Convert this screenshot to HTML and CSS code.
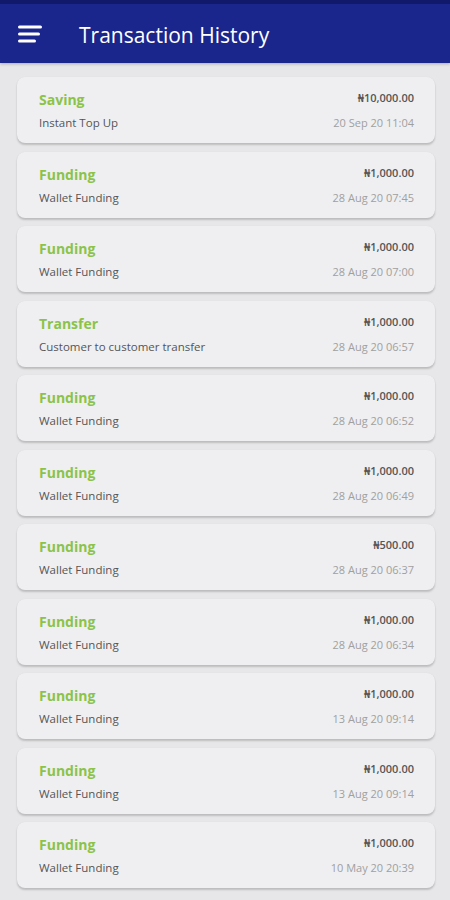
FILE: index.html
```html
<!DOCTYPE html>
<html lang="en">
<head>
  <meta charset="UTF-8" />
  <title>Transaction History</title>
  <meta name="viewport" content="width=device-width, initial-scale=1.0">
  <link rel="stylesheet" href="styles.css">
</head>
<body>
  <!-- App Bar -->
  <header class="app-bar">
    <button class="menu-btn" aria-label="Menu">
      <svg width="24" height="20" viewBox="0 0 24 20">
        <line x1="1.5" y1="3" x2="22.5" y2="3" />
        <line x1="1.5" y1="10" x2="20.5" y2="10" />
        <line x1="1.5" y1="17" x2="16.5" y2="17" />
      </svg>
    </button>
    <h1 class="app-title">Transaction History</h1>
  </header>

  <!-- Transactions -->
  <main class="tx-list">
    <div class="tx-card">
      <div class="tx-row">
        <span class="tx-type">Saving</span>
        <span class="tx-amount">&#8358;10,000.00</span>
      </div>
      <div class="tx-row">
        <span class="tx-desc">Instant Top Up</span>
        <span class="tx-date">20 Sep 20 11:04</span>
      </div>
    </div>
    <div class="tx-card">
      <div class="tx-row">
        <span class="tx-type">Funding</span>
        <span class="tx-amount">&#8358;1,000.00</span>
      </div>
      <div class="tx-row">
        <span class="tx-desc">Wallet Funding</span>
        <span class="tx-date">28 Aug 20 07:45</span>
      </div>
    </div>
    <div class="tx-card">
      <div class="tx-row">
        <span class="tx-type">Funding</span>
        <span class="tx-amount">&#8358;1,000.00</span>
      </div>
      <div class="tx-row">
        <span class="tx-desc">Wallet Funding</span>
        <span class="tx-date">28 Aug 20 07:00</span>
      </div>
    </div>
    <div class="tx-card">
      <div class="tx-row">
        <span class="tx-type">Transfer</span>
        <span class="tx-amount">&#8358;1,000.00</span>
      </div>
      <div class="tx-row">
        <span class="tx-desc">Customer to customer transfer</span>
        <span class="tx-date">28 Aug 20 06:57</span>
      </div>
    </div>
    <div class="tx-card">
      <div class="tx-row">
        <span class="tx-type">Funding</span>
        <span class="tx-amount">&#8358;1,000.00</span>
      </div>
      <div class="tx-row">
        <span class="tx-desc">Wallet Funding</span>
        <span class="tx-date">28 Aug 20 06:52</span>
      </div>
    </div>
    <div class="tx-card">
      <div class="tx-row">
        <span class="tx-type">Funding</span>
        <span class="tx-amount">&#8358;1,000.00</span>
      </div>
      <div class="tx-row">
        <span class="tx-desc">Wallet Funding</span>
        <span class="tx-date">28 Aug 20 06:49</span>
      </div>
    </div>
    <div class="tx-card">
      <div class="tx-row">
        <span class="tx-type">Funding</span>
        <span class="tx-amount">&#8358;500.00</span>
      </div>
      <div class="tx-row">
        <span class="tx-desc">Wallet Funding</span>
        <span class="tx-date">28 Aug 20 06:37</span>
      </div>
    </div>
    <div class="tx-card">
      <div class="tx-row">
        <span class="tx-type">Funding</span>
        <span class="tx-amount">&#8358;1,000.00</span>
      </div>
      <div class="tx-row">
        <span class="tx-desc">Wallet Funding</span>
        <span class="tx-date">28 Aug 20 06:34</span>
      </div>
    </div>
    <div class="tx-card">
      <div class="tx-row">
        <span class="tx-type">Funding</span>
        <span class="tx-amount">&#8358;1,000.00</span>
      </div>
      <div class="tx-row">
        <span class="tx-desc">Wallet Funding</span>
        <span class="tx-date">13 Aug 20 09:14</span>
      </div>
    </div>
    <div class="tx-card">
      <div class="tx-row">
        <span class="tx-type">Funding</span>
        <span class="tx-amount">&#8358;1,000.00</span>
      </div>
      <div class="tx-row">
        <span class="tx-desc">Wallet Funding</span>
        <span class="tx-date">13 Aug 20 09:14</span>
      </div>
    </div>
    <div class="tx-card">
      <div class="tx-row">
        <span class="tx-type">Funding</span>
        <span class="tx-amount">&#8358;1,000.00</span>
      </div>
      <div class="tx-row">
        <span class="tx-desc">Wallet Funding</span>
        <span class="tx-date">10 May 20 20:39</span>
      </div>
    </div>
  </main>
</body>
</html>
```

FILE: styles.css
```css
/* Basic Reset & Font */
* {
  margin: 0;
  padding: 0;
  box-sizing: border-box;
}
body {
  font-family: 'Open Sans', 'Noto Sans', sans-serif;
  background-color: #e7e7e9;
  color: #444;
  height: 900px;
  overflow: hidden;
}

/* App Bar */
.app-bar {
  height: 63px;
  background-color: #1b268c;
  border-top: 4px solid #111a6a;
  display: flex;
  align-items: center;
  padding: 0 0 0 18px;
  box-shadow: 0 1px 3px rgba(0, 0, 0, 0.25);
}
.menu-btn {
  background: none;
  border: none;
  width: 24px;
  height: 20px;
  display: flex;
  cursor: pointer;
}
.menu-btn line {
  stroke: #fff;
  stroke-width: 3;
  stroke-linecap: round;
}
.app-title {
  margin: 2px 0 0 37px;
  color: #fff;
  font-size: 21px;
  font-weight: 400;
}

/* Transaction List */
.tx-list {
  padding: 14px 15px 0 17px;
  display: flex;
  flex-direction: column;
  gap: 8.5px;
}
.tx-card {
  height: 66px;
  background-color: #efeff1;
  border-radius: 8px;
  padding: 12px 21px 0 22px;
  box-shadow: 0 2px 2px rgba(0, 0, 0, 0.18), 0 0 1px rgba(0, 0, 0, 0.08);
  display: flex;
  flex-direction: column;
  gap: 3px;
}
.tx-row {
  display: flex;
  justify-content: space-between;
  align-items: center;
}
.tx-type {
  font-size: 14px;
  font-weight: 700;
  color: #8bc34a;
  line-height: 20px;
}
.tx-amount {
  font-size: 11px;
  font-weight: 600;
  color: #555;
  line-height: 18px;
  margin-bottom: 4px;
}
.tx-desc {
  font-size: 11.5px;
  color: #555;
  line-height: 18px;
}
.tx-date {
  font-size: 11px;
  color: #a0a0a0;
  line-height: 18px;
}
```
